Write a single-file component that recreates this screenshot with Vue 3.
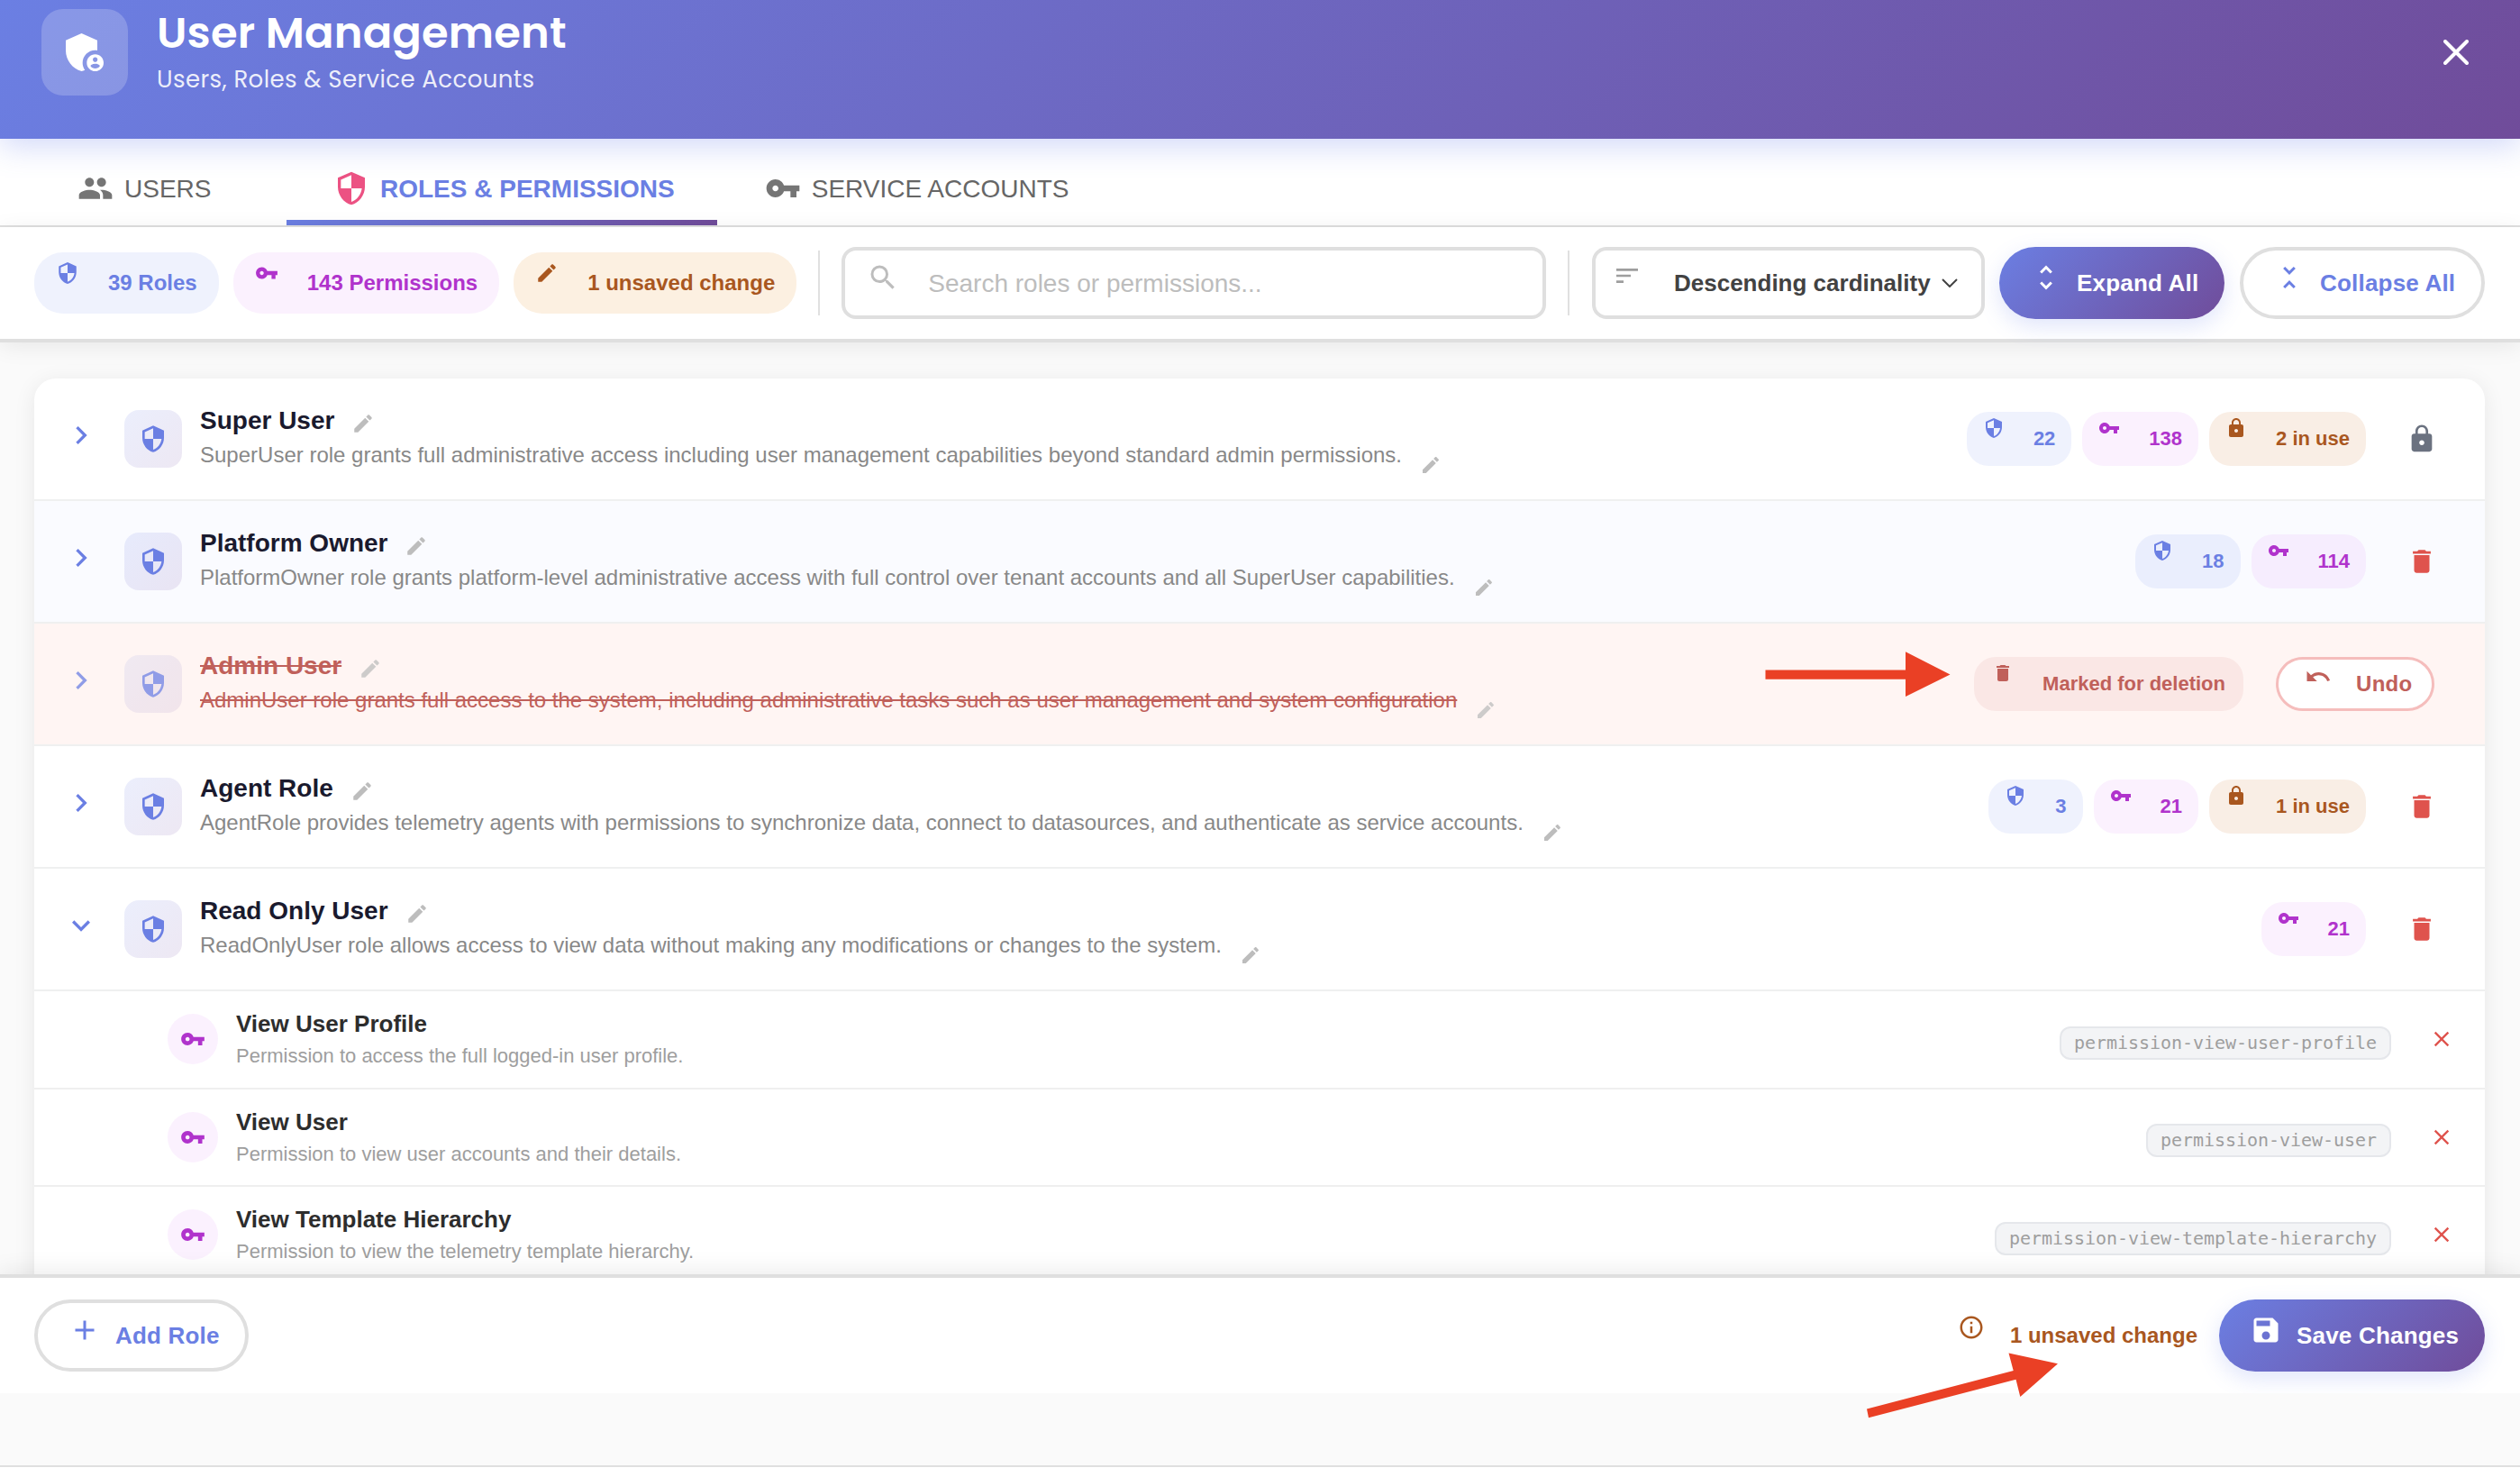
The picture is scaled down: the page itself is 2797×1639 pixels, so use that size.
<template>
  <div class="page">
    <header class="page-header">
      <div class="header-icon">
        <Icon name="admin" class="s56" />
      </div>
      <div class="header-text">
        <h1>User Management</h1>
        <p>Users, Roles &amp; Service Accounts</p>
      </div>
      <svg class="close" viewBox="0 0 28 28"><path d="M2 2l24 24M26 2L2 26" /></svg>
    </header>

    <nav class="tabs">
      <div
        v-for="tab in tabs"
        :key="tab.key"
        class="tab"
        :class="[tab.key, { active: tab.key === activeTab }]"
        @click="activeTab = tab.key"
      >
        <Icon :name="tab.icon" class="s40" />
        <span>{{ tab.label }}</span>
      </div>
    </nav>

    <div class="toolbar">
      <div class="stats">
        <div v-for="stat in stats" :key="stat.label" class="stat" :class="stat.variant">
          <Icon :name="stat.icon" class="s26" />
          <span>{{ stat.label }}</span>
        </div>
      </div>
      <div class="divider"></div>
      <div class="search">
        <Icon name="search" class="s36" />
        <span>Search roles or permissions...</span>
      </div>
      <div class="divider"></div>
      <div class="sort">
        <Icon name="sort" class="s32" />
        <span>Descending cardinality</span>
        <svg class="caret" viewBox="0 0 18 10"><path d="M1 1l8 8 8-8" /></svg>
      </div>
      <button class="btn primary expand"><Icon name="unfoldMore" class="s36" />Expand All</button>
      <button class="btn outline collapse"><Icon name="unfoldLess" class="s36" />Collapse All</button>
    </div>

    <main class="content">
      <div class="role-list">
        <template v-for="role in roles" :key="role.name">
          <div class="role" :class="{ hovered: role.hovered, deleted: role.deleted }">
            <Icon :name="role.expanded ? 'expandMore' : 'chevronRight'" class="chevron s40" />
            <div class="role-icon"><Icon name="shield" class="s32" /></div>
            <div class="role-info">
              <div class="role-name">
                <span>{{ role.name }}</span>
                <Icon name="edit" class="pencil s26" />
              </div>
              <div class="role-desc">
                <span>{{ role.description }}</span>
                <Icon name="edit" class="pencil s24" />
              </div>
            </div>
            <div v-if="role.deleted" class="badges">
              <div class="badge marked"><Icon name="trash" class="s24" /><span>Marked for deletion</span></div>
              <button class="undo"><Icon name="undo" class="s30" />Undo</button>
            </div>
            <div v-else class="badges">
              <div v-if="role.children" class="badge roles">
                <Icon name="shield" class="s24" /><span>{{ role.children }}</span>
              </div>
              <div class="badge permissions">
                <Icon name="key" class="s24" /><span>{{ role.permissions }}</span>
              </div>
              <div v-if="role.inUse" class="badge in-use">
                <Icon name="lock" class="s24" /><span>{{ role.inUse }} in use</span>
              </div>
              <div class="action" :class="{ locked: role.locked }">
                <Icon :name="role.locked ? 'lock' : 'trash'" class="s34" />
              </div>
            </div>
          </div>

          <div v-for="perm in role.items" :key="perm.code" class="permission">
            <div class="perm-icon"><Icon name="key" class="s28" /></div>
            <div class="perm-info">
              <div class="perm-name">{{ perm.name }}</div>
              <div class="perm-desc">{{ perm.description }}</div>
            </div>
            <code>{{ perm.code }}</code>
            <div class="remove"><Icon name="close" class="s28" /></div>
          </div>
        </template>
      </div>
    </main>

    <footer class="page-footer">
      <button class="btn outline add"><Icon name="add" class="s36" />Add Role</button>
      <div class="unsaved"><Icon name="info" class="s30" /><span>1 unsaved change</span></div>
      <button class="btn primary save"><Icon name="save" class="s36" />Save Changes</button>
    </footer>
    <div class="bottom-strip"></div>

    <svg class="arrows" viewBox="0 0 2797 1639">
      <polygon points="1959.5,743.5 2115,743.5 2115,723.3 2164.5,748.5 2115,773 2115,753.8 1959.5,753.8" />
      <polygon points="2072,1563.5 2234.7,1521 2229.5,1501.5 2284,1513.3 2242.3,1550 2237.5,1530.8 2074,1573.3" />
    </svg>
  </div>
</template>

<script setup>
import { h, ref } from 'vue'

const icons = {
  admin:
    'M17 11c.34 0 .67.04 1 .09V6.27L10.5 3 3 6.27v4.91c0 4.54 3.2 8.79 7.5 9.82.55-.13 1.08-.32 1.6-.55-.69-.98-1.1-2.17-1.1-3.45 0-3.31 2.69-6 6-6zM17 13c-2.21 0-4 1.79-4 4s1.79 4 4 4 4-1.79 4-4-1.79-4-4-4zm0 1.38c.62 0 1.12.51 1.12 1.12s-.51 1.12-1.12 1.12-1.12-.51-1.12-1.12.5-1.12 1.12-1.12zm0 5.37c-.93 0-1.74-.46-2.24-1.17.05-.72 1.51-1.08 2.24-1.08s2.19.36 2.24 1.08c-.5.71-1.31 1.17-2.24 1.17z',
  people:
    'M16 11c1.66 0 2.99-1.34 2.99-3S17.66 5 16 5c-1.66 0-3 1.34-3 3s1.34 3 3 3zm-8 0c1.66 0 2.99-1.34 2.99-3S9.66 5 8 5C6.34 5 5 6.34 5 8s1.34 3 3 3zm0 2c-2.33 0-7 1.17-7 3.5V19h14v-2.5c0-2.33-4.67-3.5-7-3.5zm8 0c-.29 0-.62.02-.97.05 1.16.84 1.97 1.97 1.97 3.45V19h6v-2.5c0-2.33-4.67-3.5-7-3.5z',
  shield:
    'M12 1L3 5v6c0 5.55 3.84 10.74 9 12 5.16-1.26 9-6.45 9-12V5l-9-4zm0 10.99h7c-.53 4.12-3.28 7.79-7 8.94V12H5V6.3l7-3.11v8.8z',
  key: 'M12.65 10C11.83 7.67 9.61 6 7 6c-3.31 0-6 2.69-6 6s2.69 6 6 6c2.61 0 4.83-1.67 5.65-4H17v4h4v-4h2v-4H12.65zM7 14c-1.1 0-2-.9-2-2s.9-2 2-2 2 .9 2 2-.9 2-2 2z',
  edit: 'M3 17.25V21h3.75L17.81 9.94l-3.75-3.75L3 17.25zM20.71 7.04c.39-.39.39-1.02 0-1.41l-2.34-2.34c-.39-.39-1.02-.39-1.41 0l-1.83 1.83 3.75 3.75 1.83-1.83z',
  search:
    'M15.5 14h-.79l-.28-.27A6.471 6.471 0 0 0 16 9.5 6.5 6.5 0 1 0 9.5 16c1.61 0 3.09-.59 4.23-1.57l.27.28v.79l5 4.99L20.49 19l-4.99-5zm-6 0C7.01 14 5 11.99 5 9.5S7.01 5 9.5 5 14 7.01 14 9.5 11.99 14 9.5 14z',
  sort: 'M3 18h6v-2H3v2zM3 6v2h18V6H3zm0 7h12v-2H3v2z',
  unfoldMore:
    'M12 5.83L15.17 9l1.41-1.41L12 3 7.41 7.59 8.83 9 12 5.83zm0 12.34L8.83 15l-1.41 1.41L12 21l4.59-4.59L15.17 15 12 18.17z',
  unfoldLess:
    'M7.41 18.59L8.83 20 12 16.83 15.17 20l1.41-1.41L12 14l-4.59 4.59zm9.18-13.18L15.17 4 12 7.17 8.83 4 7.41 5.41 12 10l4.59-4.59z',
  chevronRight: 'M10 6L8.59 7.41 13.17 12l-4.58 4.59L10 18l6-6z',
  expandMore: 'M16.59 8.59L12 13.17 7.41 8.59 6 10l6 6 6-6z',
  lock: 'M18 8h-1V6c0-2.76-2.24-5-5-5S7 3.24 7 6v2H6c-1.1 0-2 .9-2 2v10c0 1.1.9 2 2 2h12c1.1 0 2-.9 2-2V10c0-1.1-.9-2-2-2zm-6 9c-1.1 0-2-.9-2-2s.9-2 2-2 2 .9 2 2-.9 2-2 2zm3.1-9H8.9V6c0-1.71 1.39-3.1 3.1-3.1 1.71 0 3.1 1.39 3.1 3.1v2z',
  trash: 'M6 19c0 1.1.9 2 2 2h8c1.1 0 2-.9 2-2V7H6v12zM19 4h-3.5l-1-1h-5l-1 1H5v2h14V4z',
  undo: 'M12.5 8c-2.65 0-5.05.99-6.9 2.6L2 7v9h9l-3.62-3.62c1.39-1.16 3.16-1.88 5.12-1.88 3.54 0 6.55 2.31 7.6 5.5l2.37-.78C21.08 11.03 17.15 8 12.5 8z',
  close:
    'M19 6.41L17.59 5 12 10.59 6.41 5 5 6.41 10.59 12 5 17.59 6.41 19 12 13.41 17.59 19 19 17.59 13.41 12z',
  add: 'M19 13h-6v6h-2v-6H5v-2h6V5h2v6h6v2z',
  info: 'M11 7h2v2h-2zm0 4h2v6h-2zm1-9C6.48 2 2 6.48 2 12s4.48 10 10 10 10-4.48 10-10S17.52 2 12 2zm0 18c-4.41 0-8-3.59-8-8s3.59-8 8-8 8 3.59 8 8-3.59 8-8 8z',
  save: 'M17 3H5c-1.11 0-2 .9-2 2v14c0 1.1.89 2 2 2h14c1.1 0 2-.9 2-2V7l-4-4zm-5 16c-1.66 0-3-1.34-3-3s1.34-3 3-3 3 1.34 3 3-1.34 3-3 3zm3-10H5V5h10v4z'
}

const Icon = (props) =>
  h('svg', { viewBox: '0 0 24 24', fill: 'currentColor' }, [h('path', { d: icons[props.name] })])
Icon.props = ['name']

const activeTab = ref('roles-tab')

const tabs = [
  { key: 'users-tab', icon: 'people', label: 'USERS' },
  { key: 'roles-tab', icon: 'shield', label: 'ROLES & PERMISSIONS' },
  { key: 'service-tab', icon: 'key', label: 'SERVICE ACCOUNTS' }
]

const stats = [
  { icon: 'shield', label: '39 Roles', variant: 'roles' },
  { icon: 'key', label: '143 Permissions', variant: 'permissions' },
  { icon: 'edit', label: '1 unsaved change', variant: 'changes' }
]

const roles = ref([
  {
    name: 'Super User',
    description:
      'SuperUser role grants full administrative access including user management capabilities beyond standard admin permissions.',
    children: 22,
    permissions: 138,
    inUse: 2,
    locked: true
  },
  {
    name: 'Platform Owner',
    description:
      'PlatformOwner role grants platform-level administrative access with full control over tenant accounts and all SuperUser capabilities.',
    children: 18,
    permissions: 114,
    hovered: true
  },
  {
    name: 'Admin User',
    description:
      'AdminUser role grants full access to the system, including administrative tasks such as user management and system configuration',
    deleted: true
  },
  {
    name: 'Agent Role',
    description:
      'AgentRole provides telemetry agents with permissions to synchronize data, connect to datasources, and authenticate as service accounts.',
    children: 3,
    permissions: 21,
    inUse: 1
  },
  {
    name: 'Read Only User',
    description:
      'ReadOnlyUser role allows access to view data without making any modifications or changes to the system.',
    permissions: 21,
    expanded: true,
    items: [
      {
        name: 'View User Profile',
        description: 'Permission to access the full logged-in user profile.',
        code: 'permission-view-user-profile'
      },
      {
        name: 'View User',
        description: 'Permission to view user accounts and their details.',
        code: 'permission-view-user'
      },
      {
        name: 'View Template Hierarchy',
        description: 'Permission to view the telemetry template hierarchy.',
        code: 'permission-view-template-hierarchy'
      }
    ]
  }
])
</script>

<style>
body {
  margin: 0;
  background: #fff;
}
</style>

<style scoped>
.page {
  position: relative;
  display: flex;
  flex-direction: column;
  width: 2797px;
  height: 1639px;
  overflow: hidden;
  background: #fff;
  font-family: 'Liberation Sans', Arial, sans-serif;
}

.page * {
  box-sizing: border-box;
}

svg {
  display: block;
  flex: none;
}

button {
  font-family: inherit;
}

.s24 { width: 24px; height: 24px; }
.s26 { width: 26px; height: 26px; }
.s28 { width: 28px; height: 28px; }
.s30 { width: 30px; height: 30px; }
.s32 { width: 32px; height: 32px; }
.s34 { width: 34px; height: 34px; }
.s36 { width: 36px; height: 36px; }
.s40 { width: 40px; height: 40px; }
.s56 { width: 56px; height: 56px; }

/* Header */
.page-header {
  position: relative;
  z-index: 2;
  display: flex;
  flex: none;
  align-items: flex-start;
  height: 154px;
  padding: 10px 57px 0 46px;
  color: #fff;
  background: linear-gradient(135deg, #6b7fe3 0%, #704c9a 100%);
  box-shadow: 0 8px 32px rgba(102, 126, 234, 0.3);
}

.header-icon {
  display: flex;
  align-items: center;
  justify-content: center;
  width: 96px;
  height: 96px;
  border-radius: 24px;
  background: rgba(255, 255, 255, 0.2);
}

.header-text {
  flex: 1;
  margin-left: 32px;
  font-family: Poppins, Inter, sans-serif;
}

.header-text h1 {
  margin: -3px 0 0;
  font-size: 48px;
  font-weight: 600;
  line-height: 60px;
  letter-spacing: 0.15px;
  white-space: nowrap;
}

.header-text p {
  margin: 5px 0 0;
  font-size: 26px;
  line-height: 32px;
  letter-spacing: 0.4px;
  color: rgba(255, 255, 255, 0.9);
}

.close {
  width: 28px;
  height: 28px;
  margin-top: 34px;
  fill: none;
  stroke: #fff;
  stroke-width: 4;
  stroke-linecap: round;
}

/* Tabs */
.tabs {
  display: flex;
  flex: none;
  height: 98px;
  padding-top: 14px;
  border-bottom: 2px solid #e0e0e0;
}

.tab {
  position: relative;
  display: flex;
  align-items: center;
  gap: 12px;
  padding: 0 47px 0 52px;
  font-size: 28px;
  color: #666;
}

.tab svg {
  color: #757575;
}

.tab span {
  padding-top: 2px;
}

.tab.users-tab {
  width: 318px;
  padding: 0 0 0 86px;
}

.tab.service-tab {
  padding-left: 53px;
}

.tab.active {
  font-weight: 700;
  color: #6b7fe3;
}

.tab.active svg {
  color: #ec5283;
}

.tab.active::after {
  content: '';
  position: absolute;
  right: 0;
  bottom: 0;
  left: 0;
  height: 6px;
  background: linear-gradient(90deg, #6b7fe3, #704c9a);
}

/* Toolbar */
.toolbar {
  position: relative;
  z-index: 1;
  display: flex;
  flex: none;
  align-items: center;
  height: 128px;
  padding: 0 39px 0 38px;
  border-bottom: 4px solid #dfdfdf;
  background: #fff;
  box-shadow: 0 4px 24px rgba(0, 0, 0, 0.08);
}

.stats {
  display: flex;
  gap: 16px;
}

.stat {
  display: flex;
  align-items: center;
  gap: 32px;
  height: 68px;
  padding: 0 24px;
  border-radius: 32px;
  font-size: 24px;
  font-weight: 700;
  white-space: nowrap;
}

.stat svg {
  margin-bottom: 22px;
}

.stat.roles,
.badge.roles {
  color: #6b7fe3;
  background: rgba(102, 126, 234, 0.1);
}

.stat.permissions,
.badge.permissions {
  color: #b033cc;
  background: rgba(200, 50, 240, 0.07);
}

.stat.changes {
  color: #a9571f;
  background: #fcf0e1;
}

.divider {
  width: 2px;
  height: 72px;
  margin: 0 25px 0 24px;
  background: #e0e0e0;
}

.search {
  display: flex;
  flex: 1;
  align-items: center;
  gap: 32px;
  height: 80px;
  margin-left: -1px;
  padding-left: 24px;
  border: 4px solid #dfdfdf;
  border-radius: 16px;
  font-size: 28px;
  color: #bdbdbd;
}

.search svg {
  margin-bottom: 13px;
}

.search span {
  padding-top: 1px;
}

.sort {
  display: flex;
  align-items: center;
  width: 436px;
  height: 80px;
  padding-left: 19px;
  border: 4px solid #dfdfdf;
  border-radius: 16px;
  font-size: 26px;
  font-weight: 700;
  color: #424242;
  white-space: nowrap;
}

.sort .s32 {
  margin: 0 36px 16px 0;
  color: #9e9e9e;
}

.caret {
  width: 18px;
  height: 10px;
  margin-left: 12px;
  fill: none;
  stroke: #424242;
  stroke-width: 2;
}

.btn {
  display: flex;
  flex: none;
  align-items: center;
  gap: 16px;
  height: 80px;
  border: 0;
  border-radius: 40px;
  font-size: 26px;
  font-weight: 700;
  letter-spacing: 0.2px;
  white-space: nowrap;
}

.btn svg {
  margin-bottom: 12px;
}

.btn.primary {
  color: #fff;
  background: linear-gradient(135deg, #6b7fe3 0%, #704c9a 100%);
  box-shadow: 0 8px 24px rgba(102, 126, 234, 0.2);
}

.btn.outline {
  border: 4px solid #dfdfdf;
  color: #6b7fe3;
  background: #fff;
}

.expand {
  width: 250px;
  margin-left: 16px;
  padding: 0 0 0 34px;
}

.collapse {
  width: 272px;
  margin-left: 17px;
  padding: 0 0 0 33px;
}

/* Role list */
.content {
  flex: none;
  height: 1034px;
  padding: 40px 39px 0 38px;
  overflow: hidden;
  background: #fafafa;
}

.role-list {
  height: 1100px;
  overflow: hidden;
  border-radius: 24px;
  background: #fff;
  box-shadow: 0 4px 24px rgba(0, 0, 0, 0.08);
}

.role {
  display: flex;
  align-items: center;
  height: 136px;
  padding: 0 43px 0 32px;
  border-bottom: 2px solid #eff0f0;
}

.role.hovered {
  background: #fafbff;
}

.role.deleted {
  padding-right: 56px;
  background: #fff5f3;
}

.chevron {
  margin-bottom: 8px;
  color: #6b7fe3;
}

.role-icon {
  display: flex;
  align-items: center;
  justify-content: center;
  width: 64px;
  height: 64px;
  margin-left: 28px;
  border-radius: 16px;
  color: #6b7fe3;
  background: linear-gradient(135deg, rgba(102, 126, 234, 0.13), rgba(118, 75, 162, 0.13));
}

.deleted .chevron,
.deleted .role-icon,
.deleted .pencil {
  opacity: 0.75;
}

.role-info {
  flex: 1;
  margin-left: 20px;
  padding-bottom: 3px;
  white-space: nowrap;
}

.role-name,
.role-desc {
  display: flex;
  align-items: center;
}

.role-name {
  gap: 19px;
  height: 39px;
  font-size: 28px;
  font-weight: 700;
  color: #1a1a2e;
}

.role-desc {
  gap: 20px;
  height: 38px;
  font-size: 24px;
  color: #888;
}

.deleted .role-name,
.deleted .role-desc {
  color: #c0605a;
}

.deleted .role-name span,
.deleted .role-desc span {
  text-decoration: line-through;
}

.pencil {
  margin-top: 7px;
  color: #bdbdbd;
}

.role-desc .pencil {
  margin-top: 22px;
}

.badges {
  display: flex;
  align-items: center;
  gap: 12px;
}

.badge {
  display: flex;
  align-items: center;
  gap: 32px;
  height: 60px;
  padding: 0 18px;
  border-radius: 24px;
  font-size: 22px;
  font-weight: 700;
  white-space: nowrap;
}

.badge svg {
  margin-bottom: 24px;
}

.badge.in-use {
  color: #a9571f;
  background: #f9eee5;
}

.badge.marked {
  padding: 0 20px;
  color: #c0605a;
  background: #fae7e5;
}

.undo {
  display: flex;
  align-items: center;
  gap: 27px;
  width: 176px;
  height: 60px;
  margin-left: 24px;
  padding: 0 0 0 29px;
  border: 3px solid #f5bdbc;
  border-radius: 30px;
  font-size: 24px;
  font-weight: 700;
  letter-spacing: 0.3px;
  color: #c0605a;
  background: #fff;
}

.undo svg {
  margin-bottom: 16px;
}

.action {
  display: flex;
  justify-content: center;
  width: 54px;
  margin-left: 23px;
  color: #df534d;
}

.action.locked {
  color: #6b7280;
}

/* Permissions */
.permission {
  display: flex;
  align-items: center;
  height: 108.5px;
  padding: 0 34px 0 148px;
  border-bottom: 2px solid #efefef;
}

.perm-icon {
  display: flex;
  align-items: center;
  justify-content: center;
  width: 56px;
  height: 56px;
  border-radius: 50%;
  color: #b033cc;
  background: rgba(200, 50, 240, 0.07);
}

.perm-info {
  flex: 1;
  margin-left: 20px;
  padding-bottom: 1px;
}

.perm-name {
  font-size: 26px;
  font-weight: 700;
  line-height: 38px;
  color: #2d2d2d;
}

.perm-desc {
  font-size: 22px;
  line-height: 33px;
  color: #9e9e9e;
}

code {
  height: 37px;
  margin-top: 8px;
  padding: 0 14px;
  border: 2px solid #e5e7eb;
  border-radius: 12px;
  font-family: 'DejaVu Sans Mono', monospace;
  font-size: 20px;
  line-height: 33px;
  letter-spacing: -0.04px;
  color: #9e9e9e;
  background: #f3f4f6;
}

.remove {
  margin-left: 42px;
  color: #df534d;
}

/* Footer */
.page-footer {
  position: relative;
  z-index: 1;
  display: flex;
  flex: none;
  align-items: center;
  height: 132px;
  padding: 0 39px 0 38px;
  border-top: 4px solid #dfdfdf;
  background: #fff;
  box-shadow: 0 -4px 24px rgba(0, 0, 0, 0.08);
}

.add {
  width: 238px;
  padding: 0 0 0 34px;
}

.unsaved {
  display: flex;
  align-items: center;
  gap: 28px;
  margin: 0 24px 0 auto;
  font-size: 24px;
  font-weight: 700;
  color: #a9571f;
}

.unsaved svg {
  margin-bottom: 18px;
}

.save {
  width: 295px;
  padding: 0 0 0 34px;
}

.bottom-strip {
  position: relative;
  z-index: 1;
  flex: none;
  height: 82px;
  border-bottom: 2px solid #dfdfdf;
  background: #fafafa;
}

/* Callout arrows drawn over the page */
.arrows {
  position: absolute;
  z-index: 3;
  top: 0;
  left: 0;
  width: 2797px;
  height: 1639px;
  fill: #ea4025;
  pointer-events: none;
}
</style>
